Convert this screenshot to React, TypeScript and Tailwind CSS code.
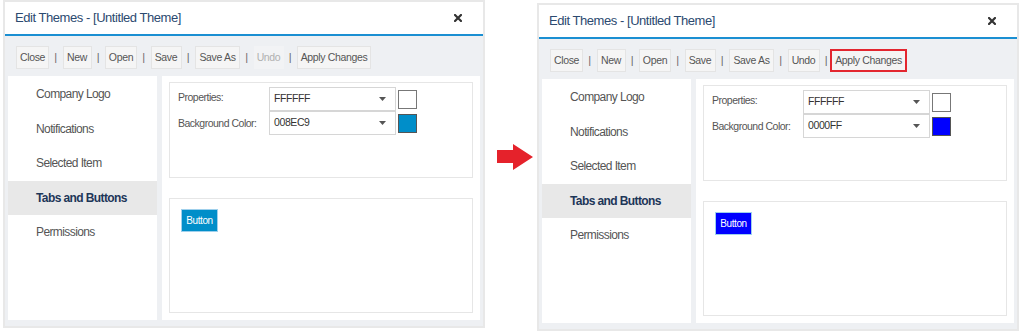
import React from "react";

type DialogProps = {
  swatch: string;
  hex: string;
  undoEnabled: boolean;
  highlightApply: boolean;
  className?: string;
};

const navItems = [
  "Company Logo",
  "Notifications",
  "Selected Item",
  "Tabs and Buttons",
  "Permissions",
];

const font = { fontFamily: '"Liberation Sans", Arial, sans-serif' };

const Sep = () => (
  <span className="w-[13.5px] text-center text-[11px] leading-none text-[#6a6a6a]">|</span>
);

const ToolButton = ({
  label,
  width,
  disabled,
  highlight,
}: {
  label: string;
  width: string;
  disabled?: boolean;
  highlight?: boolean;
}) => {
  let cls =
    "flex h-[23px] items-center justify-center text-[10.5px] tracking-[-0.35px] " + width;
  if (highlight) cls += " -ml-[3px] border-2 border-[#e3262f] bg-[#f4f4f4] text-[#555]";
  else if (disabled) cls += " bg-[#f2f3f5] text-[#b0b0b0]";
  else cls += " border border-[#e4e4e4] bg-[#f5f5f5] text-[#555]";
  return <div className={cls}>{label}</div>;
};

const Dropdown = ({ value }: { value: string }) => (
  <div className="flex h-[24px] w-[127px] items-center justify-between border border-[#d6d6d6] bg-white pl-[4px] pr-[9px]">
    <span className="text-[10.5px] tracking-[-0.4px] text-[#333]">{value}</span>
    <svg width="7" height="4" viewBox="0 0 7 4">
      <polygon points="0,0 7,0 3.5,4" fill="#555" />
    </svg>
  </div>
);

const Dialog = ({ swatch, hex, undoEnabled, highlightApply, className }: DialogProps) => (
  <div className={"flex w-[482px] flex-col border-2 border-[#e8e8e8] bg-[#eef0f3] " + (className ?? "")}>
    {/* header */}
    <div className="flex h-[34px] shrink-0 items-center justify-between border-b-2 border-[#1b8fd2] bg-white pl-[10px] pr-[21px]">
      <span className="text-[13px] tracking-[-0.45px] text-[#2c4a70]">
        Edit Themes - [Untitled Theme]
      </span>
      <svg width="8" height="8" viewBox="0 0 8 8">
        <path d="M1 1 L7 7 M7 1 L1 7" stroke="#333" strokeWidth="2.2" strokeLinecap="square" />
      </svg>
    </div>

    {/* toolbar */}
    <div className="flex h-[33px] items-center pl-[11px] pt-[10px]">
      <ToolButton label="Close" width="w-[33px]" />
      <Sep />
      <ToolButton label="New" width="w-[29px]" />
      <Sep />
      <ToolButton label="Open" width="w-[32px]" />
      <Sep />
      <ToolButton label="Save" width="w-[31px]" />
      <Sep />
      <ToolButton label="Save As" width="w-[45px]" />
      <Sep />
      <ToolButton label="Undo" width={undoEnabled ? "w-[32px]" : "w-[30px]"} disabled={!undoEnabled} />
      <Sep />
      <ToolButton
        label="Apply Changes"
        width={highlightApply ? "w-[77px]" : "w-[74px]"}
        highlight={highlightApply}
      />
    </div>

    {/* body */}
    <div className="flex gap-[5px] px-[3px] pb-[6px] pt-[7px]">
      <div className="h-[244px] w-[149px] bg-white pt-[1px]">
        {navItems.map((item) => {
          const active = item === "Tabs and Buttons";
          return (
            <div
              key={item}
              className={
                "flex h-[34.5px] items-center pl-[28px] text-[12px] tracking-[-0.6px] " +
                (active ? "bg-[#e8e8e8] font-bold text-[#1d3658]" : "text-[#555]")
              }
            >
              {item}
            </div>
          );
        })}
      </div>

      <div className="flex h-[244px] w-[318px] flex-col bg-white px-[7px] pt-[6px]">
        <div className="flex h-[96px] flex-col border border-[#e6e6e6] pl-[8px] pt-[4px]">
          <div className="flex items-start">
            <span className="w-[91px] pt-[3px] text-[10.5px] tracking-[-0.5px] text-[#555]">
              Properties:
            </span>
            <Dropdown value="FFFFFF" />
            <div className="ml-[2px] mt-[3px] h-[19px] w-[19px] border border-[#777] bg-white" />
          </div>
          <div className="flex items-start">
            <span className="w-[91px] pt-[5px] text-[10.5px] tracking-[-0.5px] text-[#555]">
              Background Color:
            </span>
            <Dropdown value={hex} />
            <div
              className={
                "ml-[2px] mt-[3px] h-[19px] w-[19px] border border-[#555] " + swatch
              }
            />
          </div>
        </div>

        <div className="mt-[20px] h-[115px] border border-[#e6e6e6] pl-[11px] pt-[10px]">
          <div
            className={
              "flex h-[23px] w-[37px] items-center justify-center border border-[#9fd0ec] text-[10px] tracking-[-0.4px] text-white " +
              swatch
            }
          >
            Button
          </div>
        </div>
      </div>
    </div>
  </div>
);

export default function App() {
  return (
    <div className="flex h-[332px] w-[1023px] items-start bg-white" style={font}>
      <Dialog
        className="ml-[3px]"
        swatch="bg-[#008ec9]"
        hex="008EC9"
        undoEnabled={false}
        highlightApply={false}
      />
      <div className="ml-[12px] mr-[4px] mt-[144px]">
        <svg width="36" height="26" viewBox="0 0 36 26">
          <polygon points="0,6 16,6 16,0 36,13 16,26 16,19 0,19" fill="#e5222b" />
        </svg>
      </div>
      <Dialog
        className="mt-[3px]"
        swatch="bg-[#0000ff]"
        hex="0000FF"
        undoEnabled={true}
        highlightApply={true}
      />
    </div>
  );
}
